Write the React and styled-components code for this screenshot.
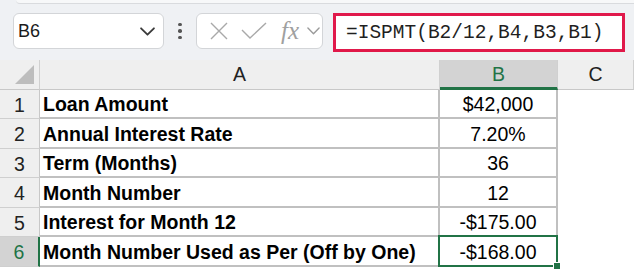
import React from "react";
import styled, { createGlobalStyle } from "styled-components";

const Global = createGlobalStyle`
  html, body { margin: 0; padding: 0; background: #ffffff; }
  body { width: 634px; height: 270px; overflow: hidden; font-family: "Liberation Sans", Arial, sans-serif; }
`;

const Page = styled.div`
  width: 634px;
  height: 270px;
  overflow: hidden;
  display: flex;
  flex-direction: column;
`;

const Toolbar = styled.div`
  position: relative;
  height: 60px;
  flex: none;
  background: #eff1f4;
  display: flex;
  align-items: flex-start;
  padding: 13px 0 0 13px;
  box-sizing: border-box;
`;

const RibbonEdge = styled.div`
  position: absolute;
  left: 16px;
  right: 0;
  top: 0;
  height: 3px;
  background: #f7f8f9;
  border-bottom: 1px solid #d9dbde;
  border-bottom-left-radius: 4px;
`;

const NameBox = styled.div`
  width: 151px;
  height: 36px;
  box-sizing: border-box;
  background: #ffffff;
  border: 1px solid #d3d5d8;
  border-radius: 6px;
  display: flex;
  align-items: center;
  justify-content: space-between;
  padding: 0 8px 0 4px;
  font-family: "Liberation Sans", Arial, sans-serif;
  font-size: 18px;
  color: #1b1b1b;
`;

const Dots = styled.div`
  width: 32px;
  height: 36px;
  display: flex;
  flex-direction: column;
  align-items: center;
  justify-content: center;
  gap: 3px;
`;

const Dot = styled.span`
  width: 3.5px;
  height: 3.5px;
  border-radius: 50%;
  background: #555555;
`;

const FxBox = styled.div`
  width: 127px;
  height: 36px;
  box-sizing: border-box;
  background: #ffffff;
  border: 1px solid #d3d5d8;
  border-radius: 6px;
  display: flex;
  align-items: center;
  padding: 0 0 0 8px;
`;

const IconSlot = styled.div`
  width: ${(p) => p.$w}px;
  height: 34px;
  display: flex;
  align-items: center;
  justify-content: center;
`;

const FxText = styled.span`
  font-family: "Liberation Serif", "DejaVu Serif", serif;
  font-style: italic;
  font-size: 25px;
  line-height: 1;
  color: #a0a0a0;
  margin-top: -2px;
`;

const FormulaBox = styled.div`
  margin-left: 10px;
  width: 292px;
  height: 39px;
  box-sizing: border-box;
  background: #ffffff;
  border: 3px solid #e0194b;
  display: flex;
  align-items: center;
  padding-left: 10px;
  font-family: "Liberation Mono", "Courier New", monospace;
  font-size: 19.5px;
  color: #1f1f1f;
`;

const Sheet = styled.div`
  flex: 1;
  display: grid;
  grid-template-columns: 40px 400px 118px 1fr;
  grid-template-rows: 30px 29px 30px 29px 30px 29px 30px;
  font-family: "Liberation Sans", Arial, sans-serif;
  font-size: 19.5px;
  color: #000;
  background: #ffffff;
`;

const Corner = styled.div`
  position: relative;
  background: #efefef;
  border-right: 1px solid #d0d0d0;
  border-bottom: 1px solid #c8c8c8;
  box-sizing: border-box;
`;

const Triangle = styled.div`
  position: absolute;
  right: 5px;
  bottom: 5px;
  width: 0;
  height: 0;
  border-left: 19px solid transparent;
  border-bottom: 19px solid #bdbdbd;
`;

const ColHead = styled.div`
  display: flex;
  align-items: center;
  justify-content: center;
  box-sizing: border-box;
  background: ${(p) => (p.$sel ? "#d3d3d3" : "#efefef")};
  color: ${(p) => (p.$sel ? "#217346" : "#222")};
  border-right: 1px solid #d0d0d0;
  border-bottom: ${(p) => (p.$sel ? "3px solid #217346" : "1px solid #c8c8c8")};
  padding-top: ${(p) => (p.$sel ? "2px" : "0")};
`;

const RowHead = styled.div`
  display: flex;
  align-items: center;
  justify-content: center;
  box-sizing: border-box;
  padding-top: 2px;
  background: ${(p) => (p.$sel ? "#d3d3d3" : "#efefef")};
  color: ${(p) => (p.$sel ? "#217346" : "#222")};
  border-right: ${(p) => (p.$sel ? "2px solid #217346" : "1px solid #c8c8c8")};
  border-bottom: 1px solid #cfcfcf;
`;

const Cell = styled.div`
  position: relative;
  display: flex;
  align-items: center;
  justify-content: ${(p) => (p.$center ? "center" : "flex-start")};
  box-sizing: border-box;
  padding: 2px 0 0 ${(p) => (p.$center ? "0" : "3px")};
  font-weight: ${(p) => (p.$bold ? 700 : 400)};
  border-right: 2px solid #c0c0c0;
  border-bottom: 2px solid #c0c0c0;
  white-space: nowrap;
`;

const Empty = styled.div`
  background: #ffffff;
`;

const Selection = styled.div`
  position: absolute;
  left: -2px;
  top: -2px;
  right: -2px;
  bottom: -2px;
  border: 2px solid #217346;
  pointer-events: none;
`;

const Handle = styled.div`
  position: absolute;
  right: -5px;
  bottom: -5px;
  width: 6px;
  height: 6px;
  background: #217346;
  border: 1px solid #ffffff;
`;

const Chevron = ({ size = 14, color = "#444", sw = 1.6 }) => (
  <svg width={size} height={size * 0.6} viewBox="0 0 14 8" fill="none">
    <path d="M1 1 L7 7 L13 1" stroke={color} strokeWidth={sw} strokeLinecap="round" strokeLinejoin="round" />
  </svg>
);

const rows = [
  ["Loan Amount", "$42,000"],
  ["Annual Interest Rate", "7.20%"],
  ["Term (Months)", "36"],
  ["Month Number", "12"],
  ["Interest for Month 12", "-$175.00"],
  ["Month Number Used as Per (Off by One)", "-$168.00"],
];

export default function App() {
  return (
    <Page>
      <Global />
      <Toolbar>
        <RibbonEdge />
        <NameBox>
          <span>B6</span>
          <Chevron size={15} color="#3a3a3a" sw={1.7} />
        </NameBox>
        <Dots>
          <Dot />
          <Dot />
          <Dot />
        </Dots>
        <FxBox>
          <IconSlot $w={28}>
            <svg width="18" height="18" viewBox="0 0 18 18">
              <path d="M1 1 L17 17 M17 1 L1 17" stroke="#a9a9a9" strokeWidth="1.4" />
            </svg>
          </IconSlot>
          <IconSlot $w={42}>
            <svg width="26" height="18" viewBox="0 0 26 18">
              <path d="M1 8 L9 16 L25 1" stroke="#a9a9a9" strokeWidth="1.4" fill="none" />
            </svg>
          </IconSlot>
          <IconSlot $w={30}>
            <FxText>fx</FxText>
          </IconSlot>
          <IconSlot $w={16}>
            <Chevron size={13} color="#9a9a9a" sw={1.5} />
          </IconSlot>
        </FxBox>
        <FormulaBox>=ISPMT(B2/12,B4,B3,B1)</FormulaBox>
      </Toolbar>
      <Sheet>
        <Corner>
          <Triangle />
        </Corner>
        <ColHead>A</ColHead>
        <ColHead $sel>B</ColHead>
        <ColHead>C</ColHead>
        {rows.map(([label, value], i) => {
          const sel = i === 5;
          return (
            <React.Fragment key={i}>
              <RowHead $sel={sel}>{i + 1}</RowHead>
              <Cell $bold>{label}</Cell>
              <Cell $center>
                {value}
                {sel && (
                  <Selection>
                    <Handle />
                  </Selection>
                )}
              </Cell>
              <Empty />
            </React.Fragment>
          );
        })}
      </Sheet>
    </Page>
  );
}
